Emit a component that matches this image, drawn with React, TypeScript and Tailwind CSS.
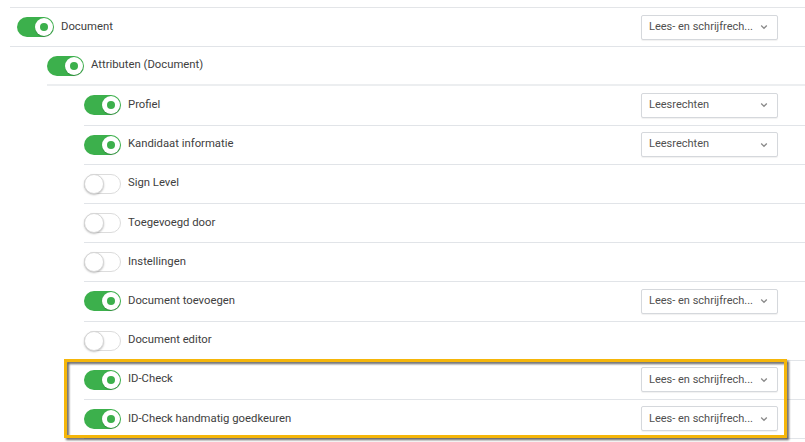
import React from "react";

type Row = { label: string; on: boolean; level: number; select?: string };

const rows: Row[] = [
  { label: "Document", on: true, level: 0, select: "Lees- en schrijfrech..." },
  { label: "Attributen (Document)", on: true, level: 1 },
  { label: "Profiel", on: true, level: 2, select: "Leesrechten" },
  { label: "Kandidaat informatie", on: true, level: 2, select: "Leesrechten" },
  { label: "Sign Level", on: false, level: 2 },
  { label: "Toegevoegd door", on: false, level: 2 },
  { label: "Instellingen", on: false, level: 2 },
  { label: "Document toevoegen", on: true, level: 2, select: "Lees- en schrijfrech..." },
  { label: "Document editor", on: false, level: 2 },
  { label: "ID-Check", on: true, level: 2, select: "Lees- en schrijfrech..." },
  { label: "ID-Check handmatig goedkeuren", on: true, level: 2, select: "Lees- en schrijfrech..." },
];

const Toggle = ({ on }: { on: boolean }) =>
  on ? (
    <div className="relative w-[37px] h-[20px] rounded-full bg-[#3cb04c] shrink-0">
      <div className="absolute right-[1px] top-[1px] w-[18px] h-[18px] rounded-full bg-white flex items-center justify-center shadow-[0_1px_1px_rgba(0,0,0,0.2)]">
        <div className="w-[8px] h-[8px] rounded-full bg-[#3cb04c]" />
      </div>
    </div>
  ) : (
    <div className="relative w-[37px] h-[20px] rounded-full bg-white border border-[#dcdcdc] shrink-0">
      <div className="absolute left-[-1px] top-[-1px] w-[20px] h-[20px] rounded-full bg-white border border-[#d6d6d6] shadow-[0_1px_2px_rgba(0,0,0,0.25)]" />
    </div>
  );

const Select = ({ value }: { value: string }) => (
  <div className="w-[137px] h-[25px] border border-[#d5d8dc] rounded-[2px] bg-white flex items-center pl-[7px] pr-[9px] text-[11px] text-[#505050] shadow-[0_1px_1px_rgba(0,0,0,0.06)]">
    <span className="whitespace-nowrap flex-1">{value}</span>
    <svg width="8" height="6" viewBox="0 0 8 6" className="text-[#8a8a8a] shrink-0 ml-[4px]">
      <path d="M1.2 1.5 L4 4.3 L6.8 1.5" fill="none" stroke="currentColor" strokeWidth="1.3" />
    </svg>
  </div>
);

const App: React.FC = () => {
  return (
    <div className="relative w-[805px] h-[442px] bg-white overflow-hidden font-['Roboto',sans-serif] text-[11.3px] text-[#404040]">
      <div className="pt-[7px]">
        <div className="ml-[10px] border-t border-[#e3e5e8]" />
        {rows.map((r, i) => (
          <div
            key={i}
            className={
              "h-[39.2px] flex items-center border-b border-[#e1e4e8] pr-[27px] " +
              (r.level === 0 ? "ml-[10px] pl-[7px]" : r.level === 1 ? "ml-[47px] border-b-2 border-[#eceef0]" : "ml-[84px]")
            }
          >
            <Toggle on={r.on} />
            <span className="ml-[7px] flex-1">{r.label}</span>
            {r.select && <Select value={r.select} />}
          </div>
        ))}
      </div>

      {/* annotation highlight */}
      <div className="absolute left-[66px] top-[361px] w-[723px] h-[79px] border-[3px] border-[#2e2e2e]/75 blur-[1px]" />
      <div className="absolute left-[64px] top-[359px] w-[723px] h-[79px] border-[3px] border-[#f5b60a]" />
    </div>
  );
};

export default App;
